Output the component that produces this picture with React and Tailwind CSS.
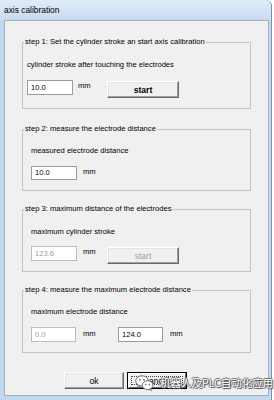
import React from "react";

function TextBox({ value, w = "w-[46px]", h = "h-[15px]", disabled }) {
  return (
    <div
      className={
        disabled
          ? "shrink-0 border border-[#bdbdbd] bg-white pl-[3px] flex items-center text-[#a0a0a0] " + w + " " + h
          : "shrink-0 border border-[#9c9c9c] bg-white pl-[3px] flex items-center text-black " + w + " " + h
      }
    >
      {value}
    </div>
  );
}

function Btn({ children, className = "", bold, disabled }) {
  return (
    <div
      className={
        "shrink-0 flex items-center justify-center bg-[#f0f0f0] border border-t-white border-l-white border-b-[#696969] border-r-[#696969] shadow-[inset_-1px_-1px_0_#a0a0a0,inset_1px_1px_0_#e3e3e3] text-[8.6px] " +
        (bold ? "font-bold " : "") +
        (disabled ? "text-[#a0a0a0] " : "text-black ") +
        className
      }
    >
      {children}
    </div>
  );
}

function Group({ legend, className, children }) {
  return (
    <div className={"relative w-[229px] border border-[#c4c4c4] " + className}>
      <span className="absolute left-[1px] top-[-6px] px-[1px] bg-[#f0f0f0] leading-[10px] whitespace-nowrap">
        {legend}
      </span>
      {children}
    </div>
  );
}

function WeChat() {
  return (
    <svg width="19" height="16" viewBox="0 0 19 16">
      <ellipse cx="7" cy="6" rx="6.3" ry="5.2" fill="#fff" stroke="#5f5f5f" strokeWidth="0.9" />
      <path d="M3.2 10 L2.4 12.6 L5.6 10.9 Z" fill="#fff" stroke="#5f5f5f" strokeWidth="0.8" />
      <circle cx="4.9" cy="4.8" r="0.9" fill="#5f5f5f" />
      <circle cx="9.1" cy="4.8" r="0.9" fill="#5f5f5f" />
      <ellipse cx="12.6" cy="10.2" rx="5.4" ry="4.4" fill="#fff" stroke="#5f5f5f" strokeWidth="0.9" />
      <path d="M15.6 13.6 L16.6 15.6 L14 14.4 Z" fill="#fff" stroke="#5f5f5f" strokeWidth="0.8" />
      <circle cx="10.8" cy="9.4" r="0.75" fill="#5f5f5f" />
      <circle cx="14.4" cy="9.4" r="0.75" fill="#5f5f5f" />
    </svg>
  );
}

export default function App() {
  return (
    <div className="relative w-[274px] h-[400px] overflow-hidden bg-white font-['Liberation_Sans',Arial,sans-serif] text-[7.6px] leading-[10px] text-black">
      <div className="w-[272px] h-[400px] flex flex-col bg-[#c3d7ee] border-r border-[#7f91a6] rounded-tr-[6px]">
        <div className="h-[20px] shrink-0 pl-[4px] flex items-center text-[8.4px] bg-gradient-to-b from-[#e0ebf7] to-[#c9dbf0] rounded-tr-[6px]">
          axis calibration
        </div>
        <div className="ml-[4px] mr-[2px] h-[376px] shrink-0 border border-[#9fb0c4] bg-[#f0f0f0] pl-[17px] pt-[21px] flex flex-col">
          <Group legend="step 1: Set the cylinder stroke an start axis calibration" className="h-[67px] pt-[17px] pl-[4px]">
            <div className="h-[10px] whitespace-nowrap">cylinder stroke after touching the electrodes</div>
            <div className="flex items-start mt-[10px]">
              <TextBox value="10.0" />
              <span className="w-[34px] pl-[5px] mt-[1px]">mm</span>
              <Btn bold className="w-[72px] h-[17px] mt-[1px]">start</Btn>
            </div>
          </Group>

          <Group legend="step 2: measure the electrode distance" className="mt-[20px] h-[62px] pt-[16px] pl-[8px]">
            <div className="h-[10px] whitespace-nowrap">measured electrode distance</div>
            <div className="flex items-start mt-[10px]">
              <TextBox value="10.0" h="h-[14px]" />
              <span className="pl-[6px] mt-[1px]">mm</span>
            </div>
          </Group>

          <Group legend="step 3: maximum distance of the electrodes" className="mt-[18px] h-[63px] pt-[17px] pl-[8px]">
            <div className="h-[10px] whitespace-nowrap">maximum cylinder stroke</div>
            <div className="flex items-start mt-[9px]">
              <TextBox value="123.6" disabled />
              <span className="w-[30px] pl-[6px] mt-[1px]">mm</span>
              <Btn disabled className="w-[72px] h-[17px] mt-[1px]">start</Btn>
            </div>
          </Group>

          <Group legend="step 4: measure the maximum electrode distance" className="mt-[18px] h-[63px] pt-[16px] pl-[8px]">
            <div className="h-[10px] whitespace-nowrap">maximum electrode distance</div>
            <div className="flex items-start mt-[10px]">
              <TextBox value="0.0" w="w-[45px]" disabled />
              <span className="w-[42px] pl-[7px] mt-[2px]">mm</span>
              <TextBox value="124.0" w="w-[45px]" />
              <span className="pl-[7px] mt-[2px]">mm</span>
            </div>
          </Group>

          <div className="flex gap-[3px] mt-[19px] ml-[42px]">
            <Btn className="w-[60px] h-[17px]">ok</Btn>
            <div className="w-[60px] h-[17px] border border-black flex">
              <div className="flex-1 flex p-[2px] bg-[#f0f0f0] border border-t-white border-l-white border-b-[#696969] border-r-[#696969]">
                <div className="flex-1 flex items-start justify-center border border-dotted border-[#444] text-[8.6px] leading-[9px]">
                  cancel
                </div>
              </div>
            </div>
          </div>
        </div>
      </div>

      <div className="absolute left-[135px] top-[375px] flex items-center gap-[6px]">
        <WeChat />
        <span className="font-['Noto_Sans_CJK_SC',sans-serif] text-[10.5px] leading-[12px] text-white [text-shadow:1px_1px_0_#555,-1px_0_0_#777,0_-1px_0_#777,0_0_2px_#333] whitespace-nowrap">
          机器人及PLC自动化应用
        </span>
      </div>
    </div>
  );
}
